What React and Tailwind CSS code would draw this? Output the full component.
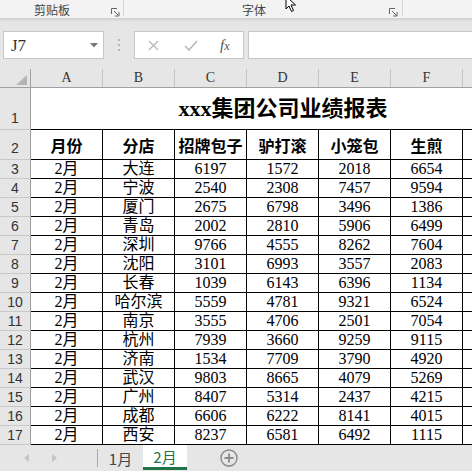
import React from "react";

const data = [
  ["大连", 6197, 1572, 2018, 6654],
  ["宁波", 2540, 2308, 7457, 9594],
  ["厦门", 2675, 6798, 3496, 1386],
  ["青岛", 2002, 2810, 5906, 6499],
  ["深圳", 9766, 4555, 8262, 7604],
  ["沈阳", 3101, 6993, 3557, 2083],
  ["长春", 1039, 6143, 6396, 1134],
  ["哈尔滨", 5559, 4781, 9321, 6524],
  ["南京", 3555, 4706, 2501, 7054],
  ["杭州", 7939, 3660, 9259, 9115],
  ["济南", 1534, 7709, 3790, 4920],
  ["武汉", 9803, 8665, 4079, 5269],
  ["广州", 8407, 5314, 2437, 4215],
  ["成都", 6606, 6222, 8141, 4015],
  ["西安", 8237, 6581, 6492, 1115],
];

const heads = ["月份", "分店", "招牌包子", "驴打滚", "小笼包", "生煎", ""];
const letters = ["A", "B", "C", "D", "E", "F", ""];

function Launcher() {
  return (
    <svg width="9" height="9" viewBox="0 0 9 9" className="text-[#666]">
      <path d="M0.5 6V0.5H6" fill="none" stroke="currentColor" strokeWidth="1" />
      <path d="M3 3L7.5 7.5" fill="none" stroke="currentColor" strokeWidth="1" />
      <path d="M8 4V8H4" fill="none" stroke="currentColor" strokeWidth="1" />
    </svg>
  );
}

function RowHead({ n, align = "center" }) {
  return (
    <div
      className={
        "w-[31px] shrink-0 bg-[#e6e6e6] border-r border-r-[#a0a0a0] border-b border-b-[#c8c8c8] flex justify-center text-[14px] leading-none text-[#333] font-['Liberation_Sans',sans-serif] " +
        (align === "end" ? "items-end pb-[4px]" : "items-center")
      }
    >
      {n}
    </div>
  );
}

const cellFont = "font-['Liberation_Serif','Noto_Sans_CJK_SC',serif]";

export default function App() {
  return (
    <div className="w-[472px] h-[471px] overflow-hidden flex flex-col bg-[#e6e6e6] relative select-none">
      {/* Ribbon */}
      <div className="h-[18px] bg-[#f3f3f3] flex shrink-0 font-['Noto_Sans_CJK_SC',sans-serif] text-[12px] text-[#444]">
        <div className="w-[124px] h-[16px] shrink-0 flex items-start border-r border-r-[#d6d6d6]">
          <span className="pl-[34px] pt-[4px] leading-[12px]">剪贴板</span>
          <span className="ml-auto mr-[3px] mt-[8px] flex">
            <Launcher />
          </span>
        </div>
        <div className="w-[279px] h-[16px] shrink-0 flex items-start border-r border-r-[#d6d6d6]">
          <span className="pl-[118px] pt-[4px] leading-[12px]">字体</span>
          <span className="ml-auto mr-[4px] mt-[8px] flex">
            <Launcher />
          </span>
        </div>
      </div>
      <div className="h-[3px] shrink-0 bg-gradient-to-b from-[#cfcfcf] to-[#e0e0e0]" />

      {/* cursor */}
      <svg className="absolute left-[285px] top-[-5px]" width="13" height="18" viewBox="0 0 13 18">
        <path d="M1 1V14L4 11L6.5 16.5L8.5 15.5L6 10H10.5Z" fill="#fff" stroke="#000" strokeWidth="1" strokeLinejoin="round" />
      </svg>

      {/* Formula bar */}
      <div className="h-[48px] shrink-0 flex pt-[10px] pb-[10px]">
        <div className="ml-[3px] w-[101px] h-[28px] bg-white border border-[#c6c6c6] flex items-center pl-[7px] pr-[5px]">
          <span className="font-['Liberation_Serif',serif] text-[17px] text-[#333] leading-none">J7</span>
          <svg className="ml-auto" width="8" height="5" viewBox="0 0 8 5">
            <path d="M0 0H8L4 4.5Z" fill="#777" />
          </svg>
        </div>
        <div className="w-[30px] flex flex-col items-center justify-center gap-[3px]">
          <span className="w-[2px] h-[2px] bg-[#b5b5b5]" />
          <span className="w-[2px] h-[2px] bg-[#b5b5b5]" />
          <span className="w-[2px] h-[2px] bg-[#b5b5b5]" />
        </div>
        <div className="w-[110px] h-[28px] bg-white border border-[#c6c6c6] flex items-center">
          <svg className="ml-[13px]" width="11" height="11" viewBox="0 0 11 11">
            <path d="M1 1L10 10M10 1L1 10" stroke="#b8b8b8" strokeWidth="1.3" />
          </svg>
          <svg className="ml-[25px]" width="14" height="11" viewBox="0 0 14 11">
            <path d="M1 6L5 10L13 1" fill="none" stroke="#b8b8b8" strokeWidth="1.6" />
          </svg>
          <span className="ml-[22px] font-['Liberation_Serif',serif] italic text-[15px] text-[#555] leading-none">
            f<span className="text-[12px]">x</span>
          </span>
        </div>
        <div className="ml-[4px] flex-1 h-[28px] bg-white border border-r-0 border-[#c6c6c6]" />
      </div>

      {/* Grid */}
      <div className="w-[535px] shrink-0 bg-white flex flex-col">
        {/* column header */}
        <div className="flex h-[19px] bg-[#e6e6e6] border-b border-b-[#a0a0a0]">
          <div className="w-[31px] shrink-0 border-r border-r-[#a0a0a0] relative">
            <svg className="absolute left-[16px] top-[6px]" width="11" height="10" viewBox="0 0 11 10">
              <path d="M11 0V10H0Z" fill="#b4b4b4" />
            </svg>
          </div>
          {letters.map((l, i) => (
            <div
              key={i}
              className="w-[72px] shrink-0 border-r border-r-[#c4c4c4] flex items-center justify-center font-['Liberation_Serif',serif] text-[14px] text-[#333] leading-none"
            >
              {l}
            </div>
          ))}
        </div>

        {/* Row 1 title */}
        <div className="flex h-[42px]">
          <RowHead n={1} align="end" />
          <div className="w-[504px] shrink-0 border-b border-black flex items-center justify-center font-['Liberation_Serif','Noto_Sans_CJK_SC',serif] font-bold text-[22px] text-black leading-none">
            xxx集团公司业绩报表
          </div>
        </div>

        {/* Row 2 header */}
        <div className="flex h-[30px]">
          <RowHead n={2} align="end" />
          {heads.map((h, i) => (
            <div
              key={i}
              className="w-[72px] shrink-0 border-r border-b border-black flex items-center justify-center font-['Noto_Sans_CJK_SC',sans-serif] font-bold text-[16px] text-black leading-none whitespace-nowrap"
            >
              {h}
            </div>
          ))}
        </div>

        {data.map((r, idx) => (
          <div key={idx} className="flex h-[19px]">
            <RowHead n={idx + 3} />
            {["2月", ...r, ""].map((v, i) => (
              <div
                key={i}
                className={
                  "w-[72px] shrink-0 border-r border-b border-black flex items-center justify-center text-[16px] text-black leading-none whitespace-nowrap " +
                  cellFont
                }
              >
                {v}
              </div>
            ))}
          </div>
        ))}
      </div>

      {/* Sheet tabs */}
      <div className="h-[26px] shrink-0 flex items-stretch bg-[#e6e6e6] font-['Noto_Sans_CJK_SC',sans-serif]">
        <div className="flex items-center pl-[24px]">
          <svg width="5" height="8" viewBox="0 0 5 8">
            <path d="M5 0V8L0 4Z" fill="#c4c4c4" />
          </svg>
          <svg className="ml-[23px]" width="5" height="8" viewBox="0 0 5 8">
            <path d="M0 0V8L5 4Z" fill="#c4c4c4" />
          </svg>
        </div>
        <div className="ml-[40px] my-[4px] w-px bg-[#a8a8a8]" />
        <div className="w-[45px] flex items-center justify-center text-[15px] text-[#444] leading-none">1月</div>
        <div className="w-[44px] bg-white border-b-[3px] border-b-[#217346] mb-[1px] flex items-center justify-center text-[15px] text-[#217346] leading-none">
          2月
        </div>
        <div className="ml-[33px] flex items-center">
          <svg width="18" height="18" viewBox="0 0 18 18">
            <circle cx="9" cy="9" r="8" fill="none" stroke="#8a8a8a" strokeWidth="1.4" />
            <path d="M9 4.5V13.5M4.5 9H13.5" stroke="#8a8a8a" strokeWidth="1.8" />
          </svg>
        </div>
      </div>
    </div>
  );
}
